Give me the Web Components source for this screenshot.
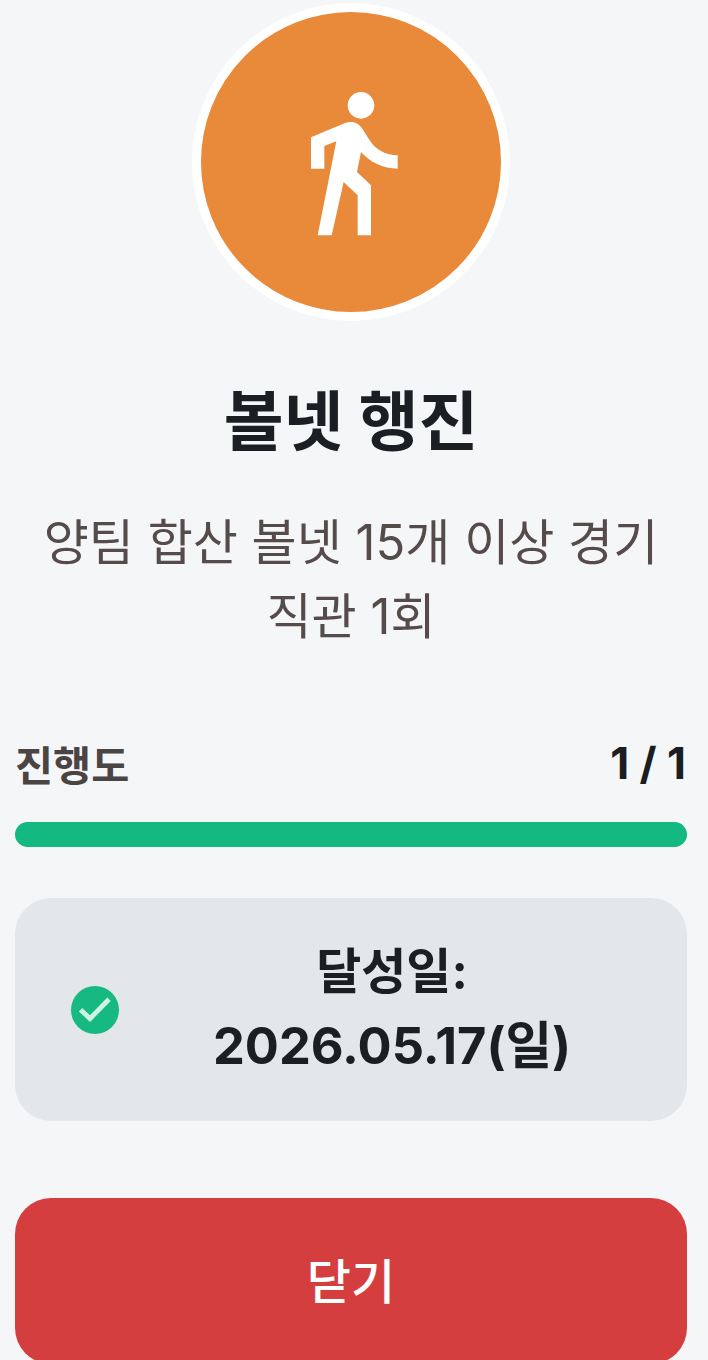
<!DOCTYPE html>
<html lang="ko">
<head>
<meta charset="utf-8">
<title>볼넷 행진</title>
<style>
    html, body {
        margin: 0;
        height: 1360px;
        overflow: hidden;
        background: #f5f6f8;
        font-family: Inter, "Noto Sans CJK KR", sans-serif;
    }
</style>
</head>
<body>
<badge-detail></badge-detail>

<script>
const defineEl = (name, html) => {
    const template = document.createElement("template");
    template.innerHTML = html;
    customElements.define(name, class extends HTMLElement {
        constructor() {
            super();
            this.attachShadow({mode: "open"});
            this.shadowRoot.appendChild(template.content.cloneNode(true));
        }
    });
};

defineEl("badge-icon", `
    <style>
        :host {
            display: flex;
            justify-content: center;
            align-items: center;
            box-sizing: border-box;
            width: 318px;
            height: 318px;
            border: 9px solid #fff;
            border-radius: 50%;
            background: #e88a3a;
        }
        svg { display: block; width: 160px; height: 160px; fill: #fff; }
    </style>
    <svg viewBox="0 0 24 24"><path d="M13.5 5.5c1.1 0 2-.9 2-2s-.9-2-2-2-2 .9-2 2 .9 2 2 2zM9.8 8.9L7 23h2.1l1.8-8 2.1 2v6h2v-7.5l-2.1-2 .6-3C14.8 12 16.8 13 19 13v-2c-1.9 0-3.5-1-4.3-2.4l-1-1.6c-.4-.6-1-1-1.7-1-.3 0-.5.1-.8.1L6 8.3V13h2V9.6l1.8-.7"/></svg>
`);

defineEl("progress-row", `
    <style>
        :host { display: block; }
        .labels {
            display: flex;
            justify-content: space-between;
            align-items: center;
            box-sizing: border-box;
            height: 60px;
            padding: 0 1px 4px 0;
            font-size: 41.4px;
            font-weight: 700;
            color: #4a4444;
        }
        .value { color: #1b1d20; font-size: 44px; }
        .track {
            height: 25px;
            margin-top: 27px;
            border-radius: 13px;
            background: #14b982;
        }
    </style>
    <div class="labels"><span><slot name="label"></slot></span><span class="value"><slot name="value"></slot></span></div>
    <div class="track"></div>
`);

defineEl("achieved-card", `
    <style>
        :host {
            display: flex;
            align-items: center;
            gap: 34px;
            box-sizing: border-box;
            height: 223px;
            padding: 0 56px;
            border-radius: 36px;
            background: #e4e7ea;
        }
        svg { display: block; flex: none; width: 48px; height: 48px; }
        .text {
            flex: 1;
            text-align: center;
            font-size: 49px;
            line-height: 74px;
            font-weight: 700;
            color: #1b1f23;
        }
        .date { font-size: 50.6px; }
    </style>
    <svg viewBox="0 0 48 48">
        <circle cx="24" cy="24" r="24" fill="#17b982"/>
        <path d="M9.5 23.8l9.5 8.8 19-19.4" fill="none" stroke="#cdf5e3" stroke-width="4.8"/>
    </svg>
    <div class="text"><slot name="label"></slot> <span class="date"><slot name="date"></slot></span></div>
`);

defineEl("close-button", `
    <style>
        :host {
            display: flex;
            justify-content: center;
            align-items: center;
            box-sizing: border-box;
            flex: none;
            height: 166px;
            padding-bottom: 6px;
            border-radius: 36px;
            background: #d53e3e;
            color: #fff;
            font-size: 48px;
            font-weight: 500;
        }
    </style>
    <slot></slot>
`);

defineEl("badge-detail", `
    <style>
        :host {
            display: flex;
            flex-direction: column;
            padding: 3px 21px 0 15px;
            width: 708px;
            box-sizing: border-box;
            color: #1b1f23;
        }
        .top { display: flex; justify-content: center; }
        h1 {
            margin: 59px 0 0;
            height: 84px;
            line-height: 84px;
            font-size: 65px;
            font-weight: 700;
            text-align: center;
        }
        p {
            margin: 42px 0 0;
            font-size: 49px;
            line-height: 74px;
            font-weight: 400;
            color: #564b4b;
            text-align: center;
        }
        progress-row { margin-top: 81px; }
        achieved-card { margin-top: 51px; }
        close-button { margin-top: 77px; }
    </style>
    <div class="top"><badge-icon></badge-icon></div>
    <h1>볼넷 행진</h1>
    <p>양팀 합산 볼넷 15개 이상 경기<br>직관 1회</p>
    <progress-row><span slot="label">진행도</span><span slot="value">1 / 1</span></progress-row>
    <achieved-card><span slot="label">달성일:</span><span slot="date">2026.05.17(일)</span></achieved-card>
    <close-button>닫기</close-button>
`);
</script>
</body>
</html>
